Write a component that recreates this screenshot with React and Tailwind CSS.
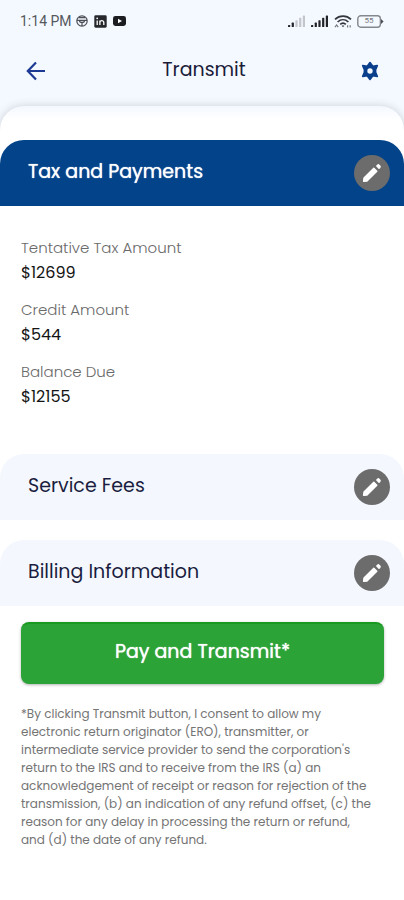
import { useState } from 'react';

const TAX_ROWS = [
  { label: 'Tentative Tax Amount', value: '$12699' },
  { label: 'Credit Amount', value: '$544' },
  { label: 'Balance Due', value: '$12155' },
];

function SignalIcon({ active }) {
  return (
    <svg viewBox="0 0 18 12" className="w-[18px] h-3" aria-hidden="true">
      {[0, 1, 2, 3, 4].map((i) => (
        <rect
          key={i}
          x={i * 3.7}
          y={10 - i * 2.4}
          width="2.2"
          height={2 + i * 2.4}
          rx="0.6"
          fill={i < active ? '#222429' : '#c3c6cb'}
        />
      ))}
    </svg>
  );
}

function WifiIcon() {
  return (
    <svg viewBox="0 0 18 13" className="w-[18px] h-[13px]" fill="none" stroke="#33363b" strokeWidth="1.7" aria-hidden="true">
      <path d="M1 4.4C5.6 0.1 12.4 0.1 17 4.4" />
      <path d="M3.6 7C6.8 4 11.2 4 14.4 7" />
      <path d="M6.2 9.4C7.9 7.8 10.1 7.8 11.8 9.4" />
      <path d="M7.6 10.4h2.8L9 12.2z" fill="#33363b" stroke="none" />
      <path d="M1 12.2l1.6-2.2 1.6 2.2M13.6 12.4v-2.2M16.2 12.4v-2.2" stroke="#777a80" strokeWidth="1.2" />
    </svg>
  );
}

function BatteryIcon() {
  return (
    <span className="relative flex items-center">
      <svg viewBox="0 0 27 13" className="w-[27px] h-[13px]" aria-hidden="true">
        <rect x="0.8" y="0.8" width="22.6" height="11.4" rx="3" fill="none" stroke="#84878c" strokeWidth="1.4" />
        <path d="M24 4l2.6 2.5L24 9z" fill="#4a4d52" />
      </svg>
      <span className="absolute inset-y-0 left-0 w-6 flex items-center justify-center font-['Roboto',sans-serif] text-[8px] leading-none text-[#777a80]">
        55
      </span>
    </span>
  );
}

function StatusBar() {
  return (
    <div className="flex items-center justify-between h-[42px] px-5">
      <div className="flex items-center">
        <span className="font-['Roboto',sans-serif] text-sm text-[#55585d]">1:14 PM</span>
        {/* Notification icons */}
        <svg viewBox="0 0 12 12" className="w-3 h-3 ml-1" fill="none" stroke="#4c4f54" strokeWidth="1.2" aria-hidden="true">
          <circle cx="6" cy="6" r="5.2" />
          <path d="M1 5.4h10M6 7v4M3.4 5.4C3.4 8 8.6 8 8.6 5.4M3 2.6h6" />
        </svg>
        <svg viewBox="0 0 13 13" className="w-[13px] h-[13px] ml-[6px]" aria-hidden="true">
          <rect x="0.3" y="0.3" width="12.4" height="12.4" rx="1.4" fill="#26282c" />
          <path d="M3.2 5.4v4.6M5.9 5.4v4.6M5.9 7.6c0-2.6 3.9-2.6 3.9 0v2.4" stroke="#fff" strokeWidth="1.3" fill="none" />
          <circle cx="3.2" cy="3.3" r="0.9" fill="#fff" />
        </svg>
        <svg viewBox="0 0 13 10" className="w-[13px] h-[10px] ml-[6px]" aria-hidden="true">
          <rect width="13" height="10" rx="2.4" fill="#1c1d20" />
          <path d="M5 2.8v4.4L9 5z" fill="#fff" />
        </svg>
      </div>
      <div className="flex items-center gap-[5px]">
        <SignalIcon active={2} />
        <SignalIcon active={5} />
        <WifiIcon />
        <BatteryIcon />
      </div>
    </div>
  );
}

function Header() {
  return (
    <header className="flex items-center justify-between h-[58px] px-5">
      <button type="button" aria-label="Back" className="w-8 h-8 flex items-center justify-center">
        <svg viewBox="0 0 20 20" className="w-5 h-5" fill="none" stroke="#1c3a94" strokeWidth="2.2">
          <path d="M19 10H2.5M10 1.6L1.8 10l8.2 8.4" />
        </svg>
      </button>
      <h1 className="text-[19px] leading-7 pb-0.5 text-[#1a1c38]">Transmit</h1>
      <button type="button" aria-label="Settings" className="w-7 h-8 flex items-center justify-center">
        <svg viewBox="0 0 20 20" className="w-5 h-5" aria-hidden="true">
          <path
            d="M10 1.6l2.8 3.6 4.5-0.6-1.7 4.2 0 2.4 1.7 4.2-4.5-0.6L10 18.4l-2.8-3.6-4.5 0.6 1.7-4.2 0-2.4-1.7-4.2 4.5 0.6z"
            fill="#0a3f8c"
            stroke="#0a3f8c"
            strokeWidth="1.6"
            strokeLinejoin="round"
          />
          <circle cx="10" cy="10" r="2.7" fill="#f4f8ff" />
        </svg>
      </button>
    </header>
  );
}

function SectionBar({ title, active, onClick }) {
  return (
    <div
      className={`flex items-center justify-between h-[66px] pl-7 pr-[14px] rounded-t-3xl ${
        active ? 'bg-[#02438a] text-white' : 'bg-[#f4f8fe] text-[#1b1d40]'
      }`}
    >
      <h2 className={`text-[19px] leading-7 pb-0.5 ${active ? '[text-shadow:0_0_1px_#fff]' : ''}`}>{title}</h2>
      <button
        type="button"
        aria-label={`Edit ${title}`}
        onClick={onClick}
        className="w-9 h-9 rounded-full bg-[#6c6c6c] flex items-center justify-center"
      >
        <svg viewBox="0 0 20 20" className="w-5 h-5" fill="#fff" stroke="#fff" strokeLinejoin="round">
          <path d="M1.6 18.2l0.4-3.2L11.8 5.2l3 3L5 18z" strokeWidth="1.4" />
          <path d="M14.8 3l0.8-0.8a1 1 0 0 1 1.4 0l0.8 0.8a1 1 0 0 1 0 1.4l-0.8 0.8z" strokeWidth="1.4" />
        </svg>
      </button>
    </div>
  );
}

function App() {
  const [section, setSection] = useState('Tax and Payments');

  return (
    <div className="min-h-screen flex flex-col bg-[#f4f8ff] font-['Poppins','Inter',sans-serif]">
      <StatusBar />
      <Header />

      {/* Sheet */}
      <main className="flex-1 mt-1.5 pt-[34px] rounded-t-3xl bg-white bg-linear-to-b from-[#f4f8fe] to-white to-[14px] shadow-[0_0_10px_rgba(0,0,0,0.16)]">
        <SectionBar
          title="Tax and Payments"
          active={section === 'Tax and Payments'}
          onClick={() => setSection('Tax and Payments')}
        />
        <dl className="px-[21px] pt-[30px] pb-11 flex flex-col gap-3">
          {TAX_ROWS.map((row) => (
            <div key={row.label}>
              <dt className="text-[15px] leading-6 font-light text-[#6a6a6a]">{row.label}</dt>
              <dd className="text-base leading-[26px] text-[#141414]">{row.value}</dd>
            </div>
          ))}
        </dl>

        <div className="flex flex-col gap-5">
          <SectionBar
            title="Service Fees"
            active={section === 'Service Fees'}
            onClick={() => setSection('Service Fees')}
          />
          <SectionBar
            title="Billing Information"
            active={section === 'Billing Information'}
            onClick={() => setSection('Billing Information')}
          />
        </div>

        <div className="pl-[21px] pr-5 pt-4 pb-12">
          <button
            type="button"
            className="w-full h-[62px] pb-1 rounded-lg bg-[#2ca336] border-t-2 border-[#189a20] text-white text-[19px] [text-shadow:0_0_1px_#fff] shadow-[0_1px_3px_rgba(0,0,0,0.3)]"
          >
            Pay and Transmit*
          </button>
          <p className="mt-[21px] pr-[10px] text-xs leading-[18px] text-[#747474]">
            *By clicking Transmit button, I consent to allow my electronic return originator (ERO), transmitter, or
            intermediate service provider to send the corporation's return to the IRS and to receive from the IRS (a)
            an acknowledgement of receipt or reason for rejection of the transmission, (b) an indication of any refund
            offset, (c) the reason for any delay in processing the return or refund, and (d) the date of any refund.
          </p>
        </div>
      </main>
    </div>
  );
}

export default App;
